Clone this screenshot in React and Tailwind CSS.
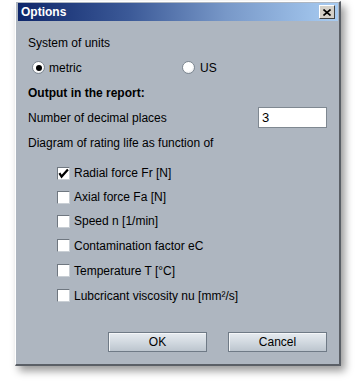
import React from "react";

function Radio({ checked }) {
  return (
    <span className="relative inline-flex w-[13px] h-[13px] rounded-full border border-[#7d8791] bg-[radial-gradient(circle_at_40%_35%,#ffffff_0%,#ffffff_50%,#d6dbe0_100%)] items-center justify-center shrink-0">
      {checked && <span className="w-[6px] h-[6px] rounded-full bg-black" />}
    </span>
  );
}

function Check({ checked }) {
  return (
    <span className="inline-flex w-[13px] h-[13px] border-t border-l border-[#6f7780] border-r border-b border-r-[#c9cfd5] border-b-[#c9cfd5] bg-white shrink-0 items-center justify-center">
      {checked && (
        <svg width="11" height="11" viewBox="0 0 11 11">
          <path d="M2 6 L3.6 8.6 L9.2 2.4" fill="none" stroke="#000" strokeWidth="2.2" strokeLinecap="square" />
        </svg>
      )}
    </span>
  );
}

const items = [
  { label: "Radial force Fr [N]", checked: true, h: "h-[24px]" },
  { label: "Axial force Fa [N]", checked: false, h: "h-[24px]" },
  { label: "Speed n [1/min]", checked: false, h: "h-[24px]" },
  { label: "Contamination factor eC", checked: false, h: "h-[25px]" },
  { label: "Temperature T [°C]", checked: false, h: "h-[25px]" },
  { label: "Lubcricant viscosity nu [mm²/s]", checked: false, h: "h-[25px]" },
];

export default function App() {
  return (
    <div
      className="w-[356px] h-[381px] bg-white pt-[1px] pl-[15px] text-[12px] text-black"
      style={{ fontFamily: '"Liberation Sans", Arial, sans-serif' }}
    >
      <div className="w-[326px] h-[365px] flex flex-col border-l border-t border-white border-r-2 border-b-2 border-r-[#5a5f66] border-b-[#5a5f66] pl-[2px] pt-[1px] pr-[1px] pb-[1px] bg-[#aeb6c0] shadow-[4px_5px_8px_rgba(0,0,0,0.4)]">
        <div className="h-[18px] flex items-center pl-[3px] pr-[3px] bg-[linear-gradient(to_right,#0e266a_0%,#3c5a98_35%,#7898c8_65%,#a8ccf2_100%)]">
          <span className="font-bold text-white text-[12px] leading-none">Options</span>
          <div className="ml-auto w-[16px] h-[14px] bg-[#d4d0c8] border-t border-l border-white border-r border-b border-r-[#404040] border-b-[#404040] flex items-center justify-center">
            <svg width="8" height="7" viewBox="0 0 8 7">
              <path d="M0.5 0.5 L7.5 6.5 M7.5 0.5 L0.5 6.5" stroke="#000" strokeWidth="1.6" />
            </svg>
          </div>
        </div>
        <div className="flex-1 flex flex-col pt-[10px] pl-[10px] pr-[11px] pb-[11px]">
          <div className="h-[24px] flex items-center">System of units</div>
          <div className="h-[25px] flex items-center">
            <div className="w-[154px] flex items-center pl-[4px] gap-[4px]">
              <Radio checked />
              <span>metric</span>
            </div>
            <div className="flex items-center gap-[5px]">
              <Radio />
              <span>US</span>
            </div>
          </div>
          <div className="h-[25px] flex items-center font-bold">Output in the report:</div>
          <div className="h-[25px] flex items-center">
            <span>Number of decimal places</span>
            <div className="ml-auto w-[69px] h-[21px] bg-white border border-[#7f8891] flex items-center pl-[3px] text-[13px]">3</div>
          </div>
          <div className="h-[25px] flex items-center">Diagram of rating life as function of</div>
          <div className="h-[6px]" />
          {items.map((it) => (
            <div key={it.label} className={`${it.h} flex items-center pl-[29px] gap-[4px]`}>
              <Check checked={it.checked} />
              <span>{it.label}</span>
            </div>
          ))}
          <div className="mt-auto flex justify-end gap-[21px]">
            <button className="w-[99px] h-[20px] border border-[#6f7a86] bg-[linear-gradient(to_bottom,#e6ebf0_0%,#d2d9e0_50%,#bcc5ce_100%)] shadow-[inset_1px_1px_0_#f4f6f8] flex items-center justify-center text-[12px] text-black">OK</button>
            <button className="w-[99px] h-[20px] border border-[#6f7a86] bg-[linear-gradient(to_bottom,#e6ebf0_0%,#d2d9e0_50%,#bcc5ce_100%)] shadow-[inset_1px_1px_0_#f4f6f8] flex items-center justify-center text-[12px] text-black">Cancel</button>
          </div>
        </div>
      </div>
    </div>
  );
}
